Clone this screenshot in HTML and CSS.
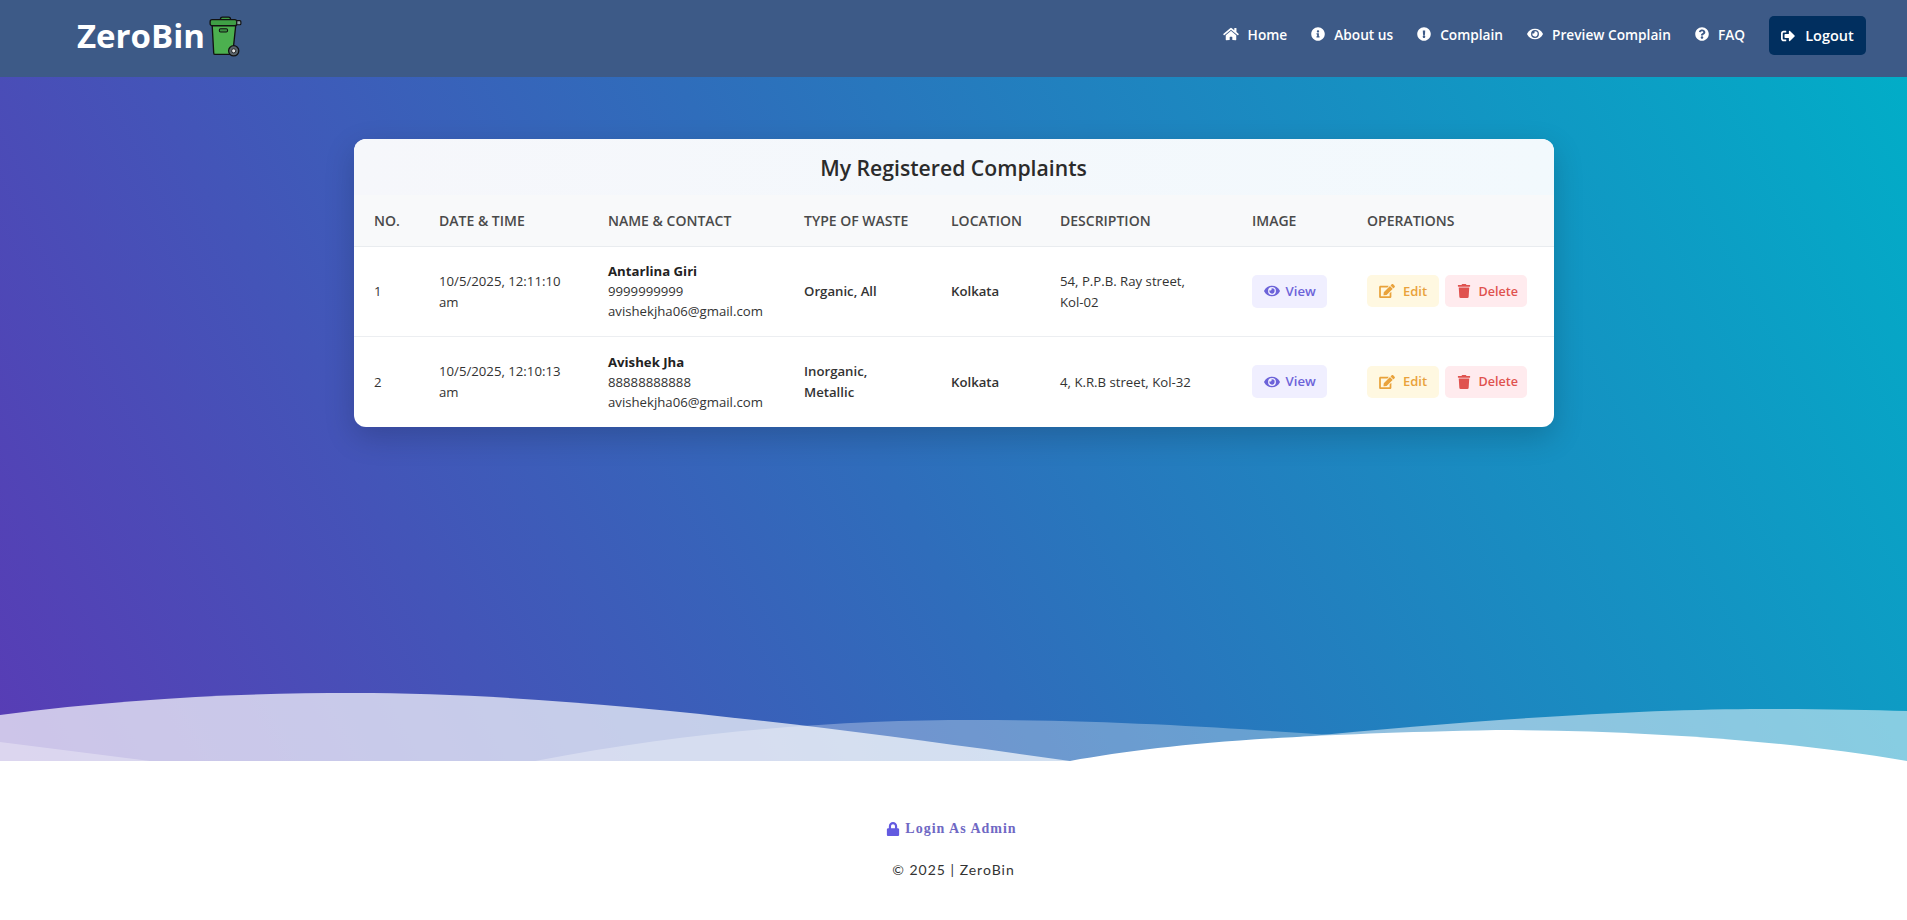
FILE: index.html
```html
<!DOCTYPE html>
<html lang="en">
<head>
    <meta charset="UTF-8">
    <meta name="viewport" content="width=device-width, initial-scale=1.0">
    <title>ZeroBin - My Complaints</title>
    <link rel="stylesheet" href="styles.css">
</head>
<body>
    <svg class="icon-defs" xmlns="http://www.w3.org/2000/svg">
        <symbol id="i-home" viewBox="0 0 576 512"><path d="M280.37 148.26L96 300.11V464a16 16 0 0 0 16 16l112.06-.29a16 16 0 0 0 15.92-16V368a16 16 0 0 1 16-16h64a16 16 0 0 1 16 16v95.64a16 16 0 0 0 16 16.05L464 480a16 16 0 0 0 16-16V300L295.67 148.26a12.19 12.19 0 0 0-15.3 0zM571.6 251.47L488 182.56V44.05a12 12 0 0 0-12-12h-56a12 12 0 0 0-12 12v72.61L318.47 43a48 48 0 0 0-61 0L4.34 251.47a12 12 0 0 0-1.6 16.9l25.5 31A12 12 0 0 0 45.15 301l235.22-193.74a12.19 12.19 0 0 1 15.3 0L530.9 301a12 12 0 0 0 16.9-1.6l25.5-31a12 12 0 0 0-1.7-16.93z"/></symbol>
        <symbol id="i-info" viewBox="0 0 512 512"><path d="M256 8C119.043 8 8 119.083 8 256c0 136.997 111.043 248 248 248s248-111.003 248-248C504 119.083 392.957 8 256 8zm0 110c23.196 0 42 18.804 42 42s-18.804 42-42 42-42-18.804-42-42 18.804-42 42-42zm56 254c0 6.627-5.373 12-12 12h-88c-6.627 0-12-5.373-12-12v-24c0-6.627 5.373-12 12-12h12v-64h-12c-6.627 0-12-5.373-12-12v-24c0-6.627 5.373-12 12-12h64c6.627 0 12 5.373 12 12v100h12c6.627 0 12 5.373 12 12v24z"/></symbol>
        <symbol id="i-alert" viewBox="0 0 512 512"><path d="M504 256c0 136.997-111.043 248-248 248S8 392.997 8 256C8 119.083 119.043 8 256 8s248 111.083 248 248zm-248 50c-25.405 0-46 20.595-46 46s20.595 46 46 46 46-20.595 46-46-20.595-46-46-46zm-43.673-165.346l7.418 136c.347 6.364 5.609 11.346 11.982 11.346h48.546c6.373 0 11.635-4.982 11.982-11.346l7.418-136c.375-6.874-5.098-12.654-11.982-12.654h-63.383c-6.884 0-12.356 5.78-11.981 12.654z"/></symbol>
        <symbol id="i-eye" viewBox="0 0 576 512"><path d="M572.52 241.4C518.29 135.59 410.93 64 288 64S57.68 135.64 3.48 241.41a32.35 32.35 0 0 0 0 29.19C57.71 376.41 165.07 448 288 448s230.32-71.64 284.52-177.41a32.35 32.35 0 0 0 0-29.19zM288 400a144 144 0 1 1 144-144 143.93 143.93 0 0 1-144 144zm0-240a95.31 95.31 0 0 0-25.31 3.79 47.85 47.85 0 0 1-66.9 66.9A95.78 95.78 0 1 0 288 160z"/></symbol>
        <symbol id="i-question" viewBox="0 0 512 512"><path d="M504 256c0 136.997-111.043 248-248 248S8 392.997 8 256C8 119.083 119.043 8 256 8s248 111.083 248 248zM262.655 90c-54.497 0-89.255 22.957-116.549 63.758-3.536 5.286-2.353 12.415 2.715 16.258l34.699 26.31c5.205 3.947 12.621 3.008 16.665-2.122 17.864-22.658 30.113-35.797 57.303-35.797 20.429 0 45.698 13.148 45.698 32.958 0 14.976-12.363 22.667-32.534 33.976C247.128 238.528 216 254.941 216 296v4c0 6.627 5.373 12 12 12h56c6.627 0 12-5.373 12-12v-1.333c0-28.462 83.186-29.647 83.186-106.667 0-58.002-60.165-102-116.531-102zM256 338c-25.916 0-47 21.084-47 47 0 25.915 21.084 47 47 47s47-21.085 47-47c0-25.916-21.084-47-47-47z"/></symbol>
        <symbol id="i-logout" viewBox="0 0 512 512"><path d="M497 273L329 441c-15 15-41 4.5-41-17v-96H152c-13.3 0-24-10.7-24-24v-96c0-13.3 10.7-24 24-24h136V88c0-21.4 25.9-32 41-17l168 168c9.3 9.4 9.3 24.6 0 34zM192 436v-40c0-6.6-5.4-12-12-12H96c-17.7 0-32-14.3-32-32V160c0-17.7 14.3-32 32-32h84c6.6 0 12-5.4 12-12V76c0-6.6-5.4-12-12-12H96c-53 0-96 43-96 96v192c0 53 43 96 96 96h84c6.6 0 12-5.4 12-12z"/></symbol>
        <symbol id="i-edit" viewBox="0 0 576 512"><path d="M402.6 83.2l90.2 90.2c3.8 3.8 3.8 10 0 13.8L274.4 405.6l-92.8 10.3c-12.4 1.4-22.9-9.1-21.5-21.5l10.3-92.8L388.8 83.2c3.8-3.8 10-3.8 13.8 0zm162-22.9l-48.8-48.8c-15.2-15.2-39.9-15.2-55.2 0l-35.4 35.4c-3.8 3.8-3.8 10 0 13.8l90.2 90.2c3.8 3.8 10 3.8 13.8 0l35.4-35.4c15.2-15.3 15.2-40 0-55.2zM384 346.2V448H64V128h229.8c3.2 0 6.2-1.3 8.5-3.5l40-40c7.6-7.6 2.2-20.5-8.5-20.5H48C21.5 64 0 85.5 0 112v352c0 26.5 21.5 48 48 48h352c26.5 0 48-21.5 48-48V306.2c0-10.7-12.9-16-20.5-8.5l-40 40c-2.2 2.3-3.5 5.3-3.5 8.5z"/></symbol>
        <symbol id="i-trash" viewBox="0 0 448 512"><path d="M432 32H312l-9.4-18.7A24 24 0 0 0 281.1 0H166.8a23.72 23.72 0 0 0-21.4 13.3L136 32H16A16 16 0 0 0 0 48v32a16 16 0 0 0 16 16h416a16 16 0 0 0 16-16V48a16 16 0 0 0-16-16zM53.2 467a48 48 0 0 0 47.9 45h245.8a48 48 0 0 0 47.9-45L416 128H32z"/></symbol>
        <symbol id="i-lock" viewBox="0 0 448 512"><path d="M400 224h-24v-72C376 68.2 307.8 0 224 0S72 68.2 72 152v72H48c-26.5 0-48 21.5-48 48v192c0 26.5 21.5 48 48 48h352c26.5 0 48-21.5 48-48V272c0-26.5-21.5-48-48-48zm-104 0H152v-72c0-39.7 32.3-72 72-72s72 32.3 72 72v72z"/></symbol>
    </svg>

    <main class="hero">
        <header class="navbar">
            <a class="brand" href="#">
                ZeroBin
                <svg class="brand-bin" viewBox="0 0 32 40" xmlns="http://www.w3.org/2000/svg">
                    <path d="M11 3.5 C11 1.5 12 1 13 1 h6 c1 0 2 .5 2 2.5z" fill="#3f9f45" stroke="#111" stroke-width="1.2"/>
                    <path d="M3 9 L4.5 36 a1.5 1.5 0 0 0 1.5 1.5 H23 L26 9z" fill="#4cb04f" stroke="#111" stroke-width="1.3"/>
                    <rect x="1" y="3.5" width="26" height="6" rx="2" fill="#3f9f45" stroke="#111" stroke-width="1.3"/>
                    <path d="M27 4.5 h3 a1 1 0 0 1 1 1 v2 a1 1 0 0 1-1 1 h-3z" fill="#8fa3a8" stroke="#111" stroke-width="1.1"/>
                    <rect x="10" y="12.5" width="8" height="3" rx="1.2" fill="#3b8f40" stroke="#111" stroke-width="1"/>
                    <circle cx="24" cy="34" r="5" fill="#59636b" stroke="#111" stroke-width="1.2"/>
                    <circle cx="24" cy="34" r="2" fill="#e6e6e6" stroke="#111" stroke-width=".8"/>
                </svg>
            </a>
            <nav class="nav-links">
                <a href="#"><svg class="icon icon-wide"><use href="#i-home"/></svg>Home</a>
                <a href="#"><svg class="icon"><use href="#i-info"/></svg>About us</a>
                <a href="#"><svg class="icon"><use href="#i-alert"/></svg>Complain</a>
                <a href="#"><svg class="icon icon-wide"><use href="#i-eye"/></svg>Preview Complain</a>
                <a href="#"><svg class="icon"><use href="#i-question"/></svg>FAQ</a>
                <a class="logout-btn" href="#"><svg class="icon"><use href="#i-logout"/></svg>Logout</a>
            </nav>
        </header>

        <section class="complaints-card">
            <h2 class="card-title">My Registered Complaints</h2>
            <table class="complaints-table">
                <colgroup>
                    <col class="col-no"><col class="col-date"><col class="col-name"><col class="col-type">
                    <col class="col-loc"><col class="col-desc"><col class="col-image"><col class="col-ops">
                </colgroup>
                <thead>
                    <tr>
                        <th>No.</th>
                        <th>Date &amp; Time</th>
                        <th>Name &amp; Contact</th>
                        <th>Type of Waste</th>
                        <th>Location</th>
                        <th>Description</th>
                        <th>Image</th>
                        <th>Operations</th>
                    </tr>
                </thead>
                <tbody>
                    <tr>
                        <td>1</td>
                        <td>10/5/2025, 12:11:10 am</td>
                        <td class="contact"><strong>Antarlina Giri</strong><br>9999999999<br>avishekjha06@gmail.com</td>
                        <td class="semi">Organic, All</td>
                        <td class="semi">Kolkata</td>
                        <td class="desc">54, P.P.B. Ray street, Kol-02</td>
                        <td class="image"><a class="btn btn-view" href="#"><svg class="icon icon-wide"><use href="#i-eye"/></svg>View</a></td>
                        <td class="ops">
                            <a class="btn btn-edit" href="#"><svg class="icon icon-wide"><use href="#i-edit"/></svg>Edit</a>
                            <a class="btn btn-delete" href="#"><svg class="icon"><use href="#i-trash"/></svg>Delete</a>
                        </td>
                    </tr>
                    <tr>
                        <td>2</td>
                        <td>10/5/2025, 12:10:13 am</td>
                        <td class="contact"><strong>Avishek Jha</strong><br>88888888888<br>avishekjha06@gmail.com</td>
                        <td class="semi">Inorganic, Metallic</td>
                        <td class="semi">Kolkata</td>
                        <td class="desc">4, K.R.B street, Kol-32</td>
                        <td class="image"><a class="btn btn-view" href="#"><svg class="icon icon-wide"><use href="#i-eye"/></svg>View</a></td>
                        <td class="ops">
                            <a class="btn btn-edit" href="#"><svg class="icon icon-wide"><use href="#i-edit"/></svg>Edit</a>
                            <a class="btn btn-delete" href="#"><svg class="icon"><use href="#i-trash"/></svg>Delete</a>
                        </td>
                    </tr>
                </tbody>
            </table>
        </section>

        <!-- wave layers along the bottom of the hero -->
        <svg class="waves" viewBox="0 0 1907 68" preserveAspectRatio="none" xmlns="http://www.w3.org/2000/svg">
            <path d="M0 22 C130 5 250 0 353 0 C560 0 800 30 1070 68 H0z" fill="#fff" fill-opacity=".7"/>
            <path d="M0 49 L150 68 H535 C700 36 850 27 973 27 C1120 27 1240 36 1330 42 V68 H1070 H0z" fill="#fff" fill-opacity=".3"/>
            <path d="M1300 44 C1480 26 1650 16 1763 16 C1820 16 1870 17 1907 18 V68 H1300z" fill="#fff" fill-opacity=".5"/>
            <path d="M1070 68 C1160 52 1260 42 1496 37 C1640 37 1790 48 1907 68z" fill="#fff"/>
        </svg>
    </main>

    <footer class="footer">
        <a class="admin-link" href="#"><svg class="icon"><use href="#i-lock"/></svg>Login As Admin</a>
        <p class="copyright">© 2025 | ZeroBin</p>
    </footer>
</body>
</html>
```

FILE: styles.css
```css
* {
    margin: 0;
    padding: 0;
    box-sizing: border-box;
}

body {
    font-family: "Open Sans", "Noto Sans", sans-serif;
    background-color: #fff;
    color: #333;
    height: 920px;
    overflow: hidden;
    display: flex;
    flex-direction: column;
}

a {
    text-decoration: none;
    color: inherit;
}

.icon-defs {
    display: none;
}

.icon {
    width: 14px;
    height: 14px;
    fill: currentColor;
    flex-shrink: 0;
}

.icon-wide {
    width: 16px;
}

.hero {
    position: relative;
    height: 761px;
    background: linear-gradient(62deg, #583cb5 0%, #2f6dbb 45%, #00afc8 100%);
}

.navbar {
    height: 77px;
    background-color: #3d5a87;
    padding: 0 41px 6px 77px;
    display: flex;
    justify-content: space-between;
    align-items: center;
}

.brand {
    display: flex;
    align-items: center;
    gap: 4px;
    color: #fff;
    font-size: 33px;
    font-weight: 700;
}

.brand-bin {
    width: 33px;
    height: 41px;
    margin-top: 1px;
}

.nav-links {
    display: flex;
    align-items: center;
    gap: 24px;
    color: #fff;
    font-size: 13.7px;
    font-weight: 600;
}

.nav-links a {
    display: flex;
    align-items: center;
    gap: 9px;
    margin-top: -3px;
}

.nav-links .logout-btn {
    margin: 0;
    height: 39px;
    width: 97px;
    justify-content: center;
    gap: 10px;
    background-color: #012f5f;
    border-radius: 5px;
    font-size: 14.5px;
}

.complaints-card {
    width: 1200px;
    margin: 62px auto 0;
    background: #fff;
    border-radius: 12px;
    overflow: hidden;
    box-shadow: 0 10px 30px rgba(0, 0, 0, 0.18);
}

.card-title {
    height: 56px;
    line-height: 57px;
    text-align: center;
    font-size: 21.2px;
    font-weight: 600;
    color: #2b2b2b;
    background: linear-gradient(90deg, #f6f7fb, #f2f9fd);
}

.complaints-table {
    width: 100%;
    table-layout: fixed;
    border-collapse: collapse;
    font-size: 13.2px;
}

.col-no { width: 65px; }
.col-date { width: 169px; }
.col-name { width: 196px; }
.col-type { width: 147px; }
.col-loc { width: 109px; }
.col-desc { width: 192px; }
.col-image { width: 115px; }
.col-ops { width: 207px; }

.complaints-table th {
    height: 51px;
    text-align: left;
    padding-left: 20.5px;
    font-size: 14px;
    font-weight: 600;
    text-transform: uppercase;
    color: #4a4a4a;
    background-color: #f8f9fa;
    border-bottom: 1px solid #e9ecef;
}

.complaints-table th,
.complaints-table td {
    padding-right: 20px;
}

.complaints-table td {
    height: 90px;
    padding-top: 1px;
    padding-left: 20.5px;
    line-height: 21px;
    color: #333;
    border-bottom: 1px solid #eceef1;
}

.complaints-table tbody tr:last-child td {
    height: 91px;
    border-bottom: none;
}

.complaints-table td.desc {
    padding-right: 40px;
}

.complaints-table td.image {
    padding-top: 0;
}

.complaints-table td.ops {
    padding-top: 0;
    padding-right: 0;
    white-space: nowrap;
}

.contact strong {
    font-weight: 700;
    color: #222;
}

.complaints-table td.contact {
    padding-top: 0;
    line-height: 20px;
}

.semi {
    font-weight: 600;
}

.btn {
    display: inline-flex;
    align-items: center;
    gap: 6px;
    height: 33px;
    padding: 0 11px 0 12px;
    border-radius: 5px;
    font-size: 13px;
    font-weight: 600;
}

.btn-view {
    background-color: #f0efff;
    color: #6c63d9;
    gap: 5.5px;
    font-size: 13.2px;
}

.btn-edit {
    height: 32px;
    padding-right: 12px;
    background-color: #fff8e1;
    color: #e9a23b;
    gap: 8px;
    margin-right: 2px;
}

.btn-delete {
    height: 32px;
    padding-right: 9px;
    background-color: #ffebee;
    color: #e0524f;
    gap: 8px;
    font-size: 12.6px;
}

.waves {
    position: absolute;
    left: 0;
    bottom: 0;
    width: 100%;
    height: 68px;
    display: block;
}

.footer {
    flex: 1;
    padding-top: 58px;
    text-align: center;
}

.admin-link {
    display: inline-flex;
    align-items: center;
    gap: 5px;
    padding-right: 4px;
    font-family: "Liberation Serif", serif;
    font-size: 14px;
    font-weight: 700;
    letter-spacing: 1px;
    color: #6f68c4;
}

.admin-link .icon {
    color: #635ae0;
}

.copyright {
    margin-top: 20px;
    font-family: Lato, sans-serif;
    font-size: 14px;
    letter-spacing: 1px;
    color: #333;
}
```
